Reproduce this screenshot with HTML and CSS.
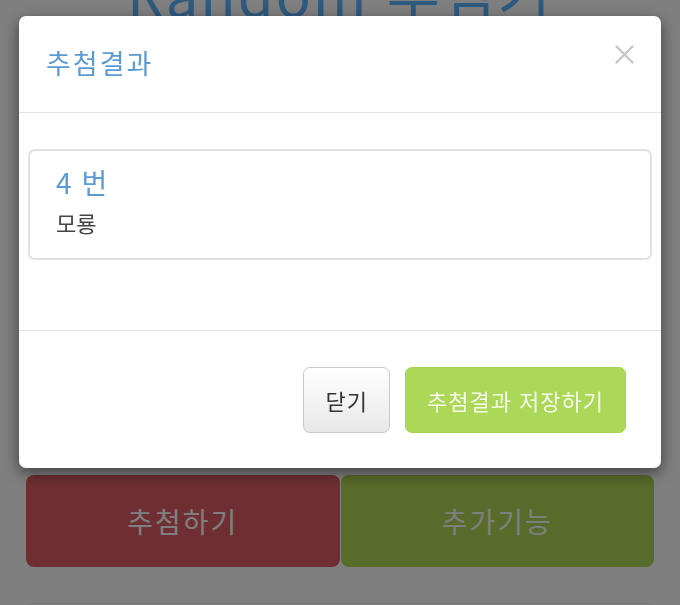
FILE: index.html
```html
<!DOCTYPE html>
<html lang="ko">
<head>
<meta charset="utf-8">
<title>Random 추첨기</title>
<link rel="stylesheet" href="styles.css">
</head>
<body>
<div class="page">
  <h1 class="page-title">Random 추첨기</h1>
  <div class="actions">
    <button class="big-btn big-btn--red">추첨하기</button>
    <button class="big-btn big-btn--green">추가기능</button>
  </div>
  <div class="next-section"></div>
</div>

<div class="backdrop"></div>

<div class="modal" role="dialog">
  <div class="modal-header">
    <h2 class="modal-title">추첨결과</h2>
    <button class="modal-close" aria-label="닫기">
      <svg width="19" height="19" viewBox="0 0 19 19"><path d="M1.5 1.5 L17.5 17.5 M17.5 1.5 L1.5 17.5" stroke="#c6c6c6" stroke-width="2.4" stroke-linecap="round" fill="none"/></svg>
    </button>
  </div>
  <div class="modal-body">
    <div class="result-panel">
      <div class="result-number">4 번</div>
      <div class="result-name">모룡</div>
    </div>
  </div>
  <div class="modal-footer">
    <button class="btn btn-default">닫기</button>
    <button class="btn btn-save">추첨결과 저장하기</button>
  </div>
</div>
</body>
</html>
```

FILE: styles.css
```css
html, body {
  margin: 0;
  padding: 0;
}
body {
  background: #ffffff;
  font-family: "Noto Sans CJK KR", "Noto Sans", sans-serif;
  width: 680px;
  height: 605px;
  overflow: hidden;
  position: relative;
}
.page {
  padding: 0 26px;
}
.page-title {
  margin: -37px 0 0;
  font-size: 58px;
  line-height: 58px;
  font-weight: 400;
  text-align: center;
  color: #5ab4ff;
  letter-spacing: 2px;
}
.actions {
  display: flex;
  gap: 1px;
  margin-top: 454px;
}
.big-btn {
  flex: 1;
  height: 92px;
  border: none;
  border-radius: 8px;
  font-family: inherit;
  font-size: 28px;
  letter-spacing: 2px;
  color: #ffffff;
}
.big-btn--red {
  background: #de5e64;
}
.big-btn--green {
  background: #aed854;
}
.next-section {
  margin-top: 36px;
  height: 20px;
  border-top: 1px solid #e8e8e8;
  border-radius: 6px 6px 0 0;
}
.backdrop {
  position: fixed;
  inset: 0;
  background: rgba(0, 0, 0, 0.5);
}
.modal {
  position: fixed;
  top: 16px;
  left: 19px;
  width: 642px;
  background: #fff;
  border-radius: 7px;
  box-shadow: 0 5px 15px rgba(0, 0, 0, 0.5);
  display: flex;
  flex-direction: column;
}
.modal-header {
  height: 96px;
  padding: 0 27px;
  border-bottom: 1px solid #e5e5e5;
  display: flex;
  align-items: center;
  justify-content: space-between;
}
.modal-title {
  margin: 0;
  font-size: 27px;
  font-weight: 400;
  letter-spacing: 2px;
  color: #5b9bd4;
  line-height: 1.2;
  padding-bottom: 1px;
}
.modal-close {
  align-self: flex-start;
  margin-top: 29px;
  padding: 0;
  border: none;
  background: none;
  width: 19px;
  height: 19px;
  display: flex;
}
.modal-body {
  padding: 36px 9px 70px;
}
.result-panel {
  border: 2px solid #e0e0e0;
  border-radius: 7px;
  padding: 14px 26px 20px;
}
.result-number {
  font-size: 28px;
  line-height: 34px;
  color: #5b9bd4;
  letter-spacing: 1px;
}
.result-name {
  margin-top: 8px;
  font-size: 22px;
  line-height: 31px;
  color: #444;
}
.modal-footer {
  border-top: 1px solid #e5e5e5;
  padding: 36px 35px 35px;
  display: flex;
  justify-content: flex-end;
  gap: 15px;
}
.btn {
  height: 66px;
  padding: 0 21px;
  border-radius: 7px;
  font-family: inherit;
  font-size: 22px;
  letter-spacing: 1px;
  line-height: 1;
}
.btn-default {
  background: linear-gradient(#ffffff, #e8e8e8);
  border: 1px solid #c8c8c8;
  color: #333;
}
.btn-save {
  background: #acd858;
  border: 1px solid #a6d352;
  color: #f6fbec;
}
```
